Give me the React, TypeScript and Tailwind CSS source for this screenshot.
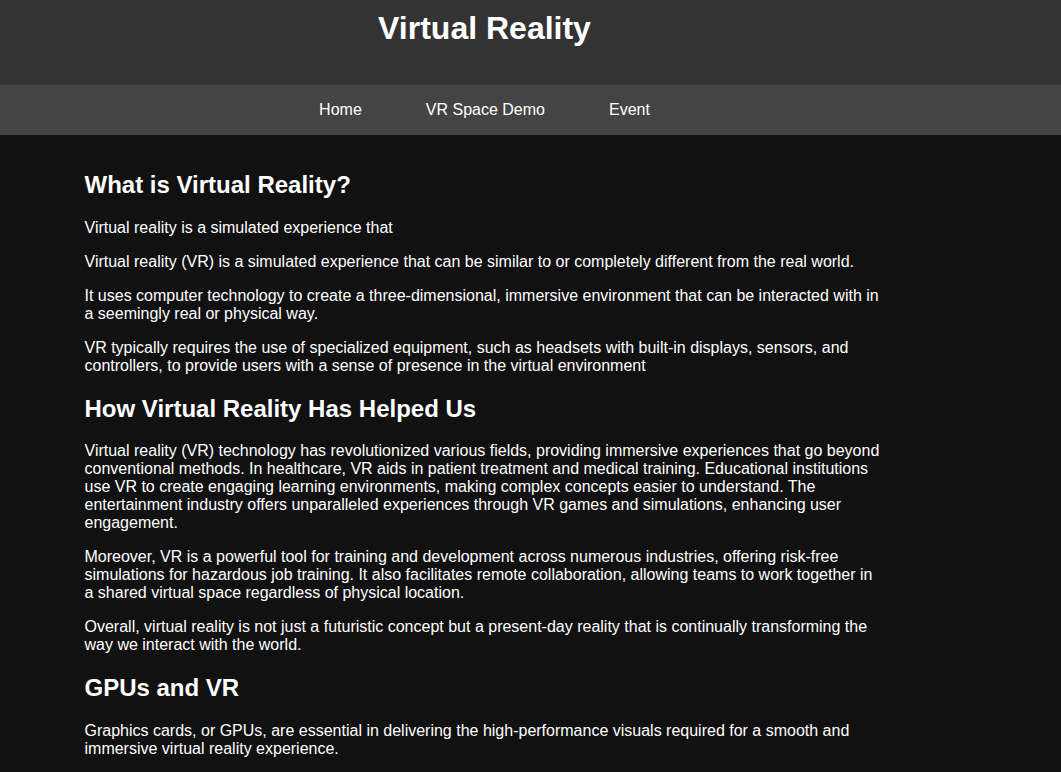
const navLinks = ['Home', 'VR Space Demo', 'Event'];

const App = () => {
  return (
    <div className="min-h-[772px] bg-[#111111] text-white font-['Liberation_Sans',Arial,sans-serif]">
      {/* Header */}
      <header className="bg-[#333333] h-[85px] pt-[10px]">
        <div className="w-[969px] text-center">
          <h1 className="text-[32px] leading-[37px] font-bold">Virtual Reality</h1>
        </div>
      </header>

      {/* Nav */}
      <nav className="bg-[#444444] h-[50px]">
        <ul className="w-[969px] h-full flex items-center justify-center text-[16px] leading-[18px]">
          {navLinks.map((link) => (
            <li key={link} className="px-8">
              <a href="#">{link}</a>
            </li>
          ))}
        </ul>
      </nav>

      {/* Content */}
      <main className="w-[969px] pt-4 pb-4">
        <div className="w-[800px] mx-auto text-[16px] leading-[18px]">
          <h2 className="text-[24px] leading-[27.6px] font-bold mt-5 mb-5">What is Virtual Reality?</h2>
          <p className="my-4">Virtual reality is a simulated experience that</p>
          <p className="my-4">
            Virtual reality (VR) is a simulated experience that can be similar to or completely different from the real world.
          </p>
          <p className="my-4">
            It uses computer technology to create a three-dimensional, immersive environment that can be interacted with in a seemingly real or physical way.
          </p>
          <p className="my-4">
            VR typically requires the use of specialized equipment, such as headsets with built-in displays, sensors, and controllers, to provide users with a sense of presence in the virtual environment
          </p>

          <h2 className="text-[24px] leading-[27.6px] font-bold mt-5 mb-5">How Virtual Reality Has Helped Us</h2>
          <p className="my-4">
            Virtual reality (VR) technology has revolutionized various fields, providing immersive experiences that go beyond conventional methods. In healthcare, VR aids in patient treatment and medical training. Educational institutions use VR to create engaging learning environments, making complex concepts easier to understand. The entertainment industry offers unparalleled experiences through VR games and simulations, enhancing user engagement.
          </p>
          <p className="my-4">
            Moreover, VR is a powerful tool for training and development across numerous industries, offering risk-free simulations for hazardous job training. It also facilitates remote collaboration, allowing teams to work together in a shared virtual space regardless of physical location.
          </p>
          <p className="my-4">
            Overall, virtual reality is not just a futuristic concept but a present-day reality that is continually transforming the way we interact with the world.
          </p>

          <h2 className="text-[24px] leading-[27.6px] font-bold mt-5 mb-5">GPUs and VR</h2>
          <p className="my-4">
            Graphics cards, or GPUs, are essential in delivering the high-performance visuals required for a smooth and immersive virtual reality experience.
          </p>
        </div>
      </main>
    </div>
  );
};

export default App;
